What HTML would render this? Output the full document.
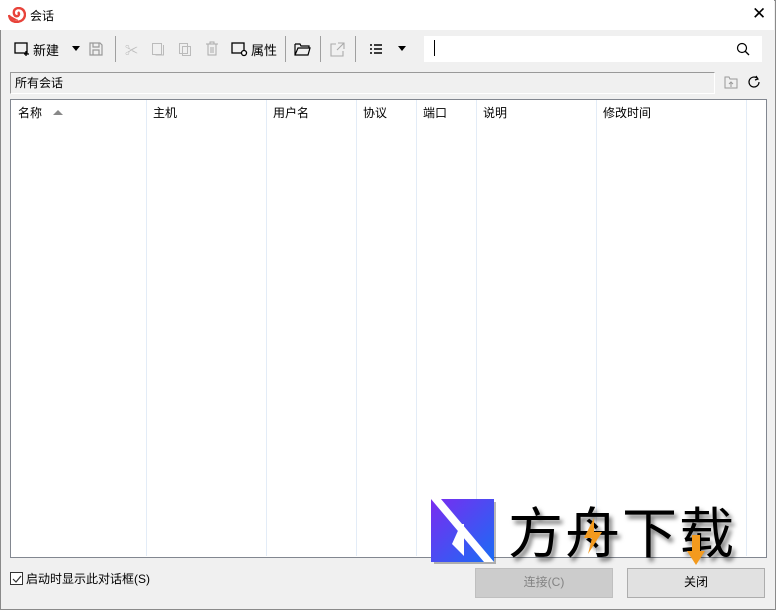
<!DOCTYPE html>
<html><head><meta charset="utf-8"><style>
*{margin:0;padding:0;box-sizing:border-box}
body{width:776px;height:610px;overflow:hidden;background:#f0f0f0;font-family:"Liberation Sans","Noto Sans CJK SC",sans-serif;font-size:12px;color:#000;position:relative}
.win{position:absolute;left:0;top:0;width:776px;height:610px;border:1px solid #8a8a8a}
.title{position:absolute;left:0;top:0;width:774px;height:30px;background:#fff}
.abs{position:absolute}
.sep{position:absolute;top:36px;width:1px;height:26px;background:#a0a0a0}
.col{position:absolute;top:100px;width:1px;height:456px;background:#e3ecf7}
.hd{position:absolute;top:104px;font-size:12px}
</style></head><body>
<div class="win"></div>
<div class="title"></div>
<svg class="abs" style="left:8px;top:7px" width="18" height="16" viewBox="0 0 18 16"><path d="M1 8 Q2 15 9 15 Q17 14 17 7 Q16 1 10 1 Q5 2 6 7 Q7 10 10 9 Q12 7 10 5" fill="none" stroke="#e8433a" stroke-width="2.4"/><path d="M1 8 Q4 14 10 13" fill="#e8433a" stroke="#e8433a"/></svg>
<div class="abs" style="left:30px;top:7px;font-size:12px">会话</div>
<div class="abs" style="left:752px;top:4px;font-size:17px;font-weight:300">✕</div>
<svg class="abs" style="left:14px;top:42px" width="16" height="14"><rect x="1" y="1" width="12" height="10" fill="none" stroke="#000" stroke-width="1.3"/><path d="M12 9v5M10 12h5" stroke="#000" stroke-width="1.3"/></svg>
<div class="abs" style="left:33px;top:40px;font-size:13px">新建</div>
<div class="abs" style="left:72px;top:46px;border:4px solid transparent;border-top:5px solid #000"></div>
<svg class="abs" style="left:89px;top:42px" width="14" height="14"><path d="M1 1h10l2 2v10H1z M4 1v4h6V1 M4 13V8h6v5" fill="none" stroke="#999" stroke-width="1.2"/></svg>
<div class="sep" style="left:115px"></div>
<div class="abs" style="left:125px;top:40px;color:#bbb;font-size:13px">✂</div>
<svg class="abs" style="left:151px;top:42px" width="14" height="14"><rect x="1.5" y="1.5" width="9" height="11" fill="none" stroke="#bbb"/><path d="M12.5 3v10h-8" fill="none" stroke="#bbb"/></svg>
<svg class="abs" style="left:178px;top:42px" width="16" height="16"><rect x="1.5" y="1.5" width="8" height="10" fill="none" stroke="#bbb"/><rect x="4.5" y="4.5" width="8" height="9" fill="none" stroke="#bbb"/></svg>
<svg class="abs" style="left:205px;top:41px" width="14" height="15"><path d="M1 3h12M5 3V1h4v2M3 3v11h8V3M6 6v6M8 6v6" fill="none" stroke="#aaa"/></svg>
<svg class="abs" style="left:231px;top:42px" width="17" height="15"><rect x="1" y="1" width="12" height="10" fill="none" stroke="#000" stroke-width="1.3"/><circle cx="13" cy="11" r="2.5" fill="#fff" stroke="#000" stroke-width="1.3"/></svg>
<div class="abs" style="left:251px;top:40px;font-size:13px">属性</div>
<div class="sep" style="left:285px"></div>
<svg class="abs" style="left:294px;top:43px" width="18" height="13"><path d="M1 1h5l1 2h8v2 M1 1v11h13l2-7H4L1 12" fill="none" stroke="#000" stroke-width="1.2"/></svg>
<div class="sep" style="left:320px"></div>
<svg class="abs" style="left:330px;top:42px" width="15" height="15"><path d="M6 2H1v12h12V9M8 1h6v6M14 1L7 8" fill="none" stroke="#aaa" stroke-width="1.1"/></svg>
<div class="sep" style="left:355px"></div>
<svg class="abs" style="left:369px;top:43px" width="14" height="12"><path d="M1 2h2M1 6h2M1 10h2M5 2h8M5 6h8M5 10h8" stroke="#000" stroke-width="1.5"/></svg>
<div class="abs" style="left:398px;top:46px;border:4px solid transparent;border-top:5px solid #000"></div>
<div class="abs" style="left:424px;top:36px;width:338px;height:26px;background:#fff"></div>
<div class="abs" style="left:434px;top:40px;width:1px;height:16px;background:#000"></div>
<svg class="abs" style="left:736px;top:42px" width="14" height="14"><circle cx="6" cy="6" r="4.5" fill="none" stroke="#000" stroke-width="1.2"/><path d="M9 9l4 4" stroke="#000" stroke-width="1.3"/></svg>
<div class="abs" style="left:10px;top:72px;width:705px;height:22px;border:1px solid #999;border-right-color:#fff;border-bottom-color:#fff;background:#f0f0f0"></div>
<div class="abs" style="left:15px;top:74px;font-size:12px">所有会话</div>
<svg class="abs" style="left:724px;top:76px" width="14" height="13"><path d="M1 1h4l1 2h7v9H1z M7 11V6M5 8l2-2 2 2" fill="none" stroke="#999"/></svg>
<svg class="abs" style="left:747px;top:75px" width="14" height="14"><path d="M12 7a5 5 0 1 1-2-4" fill="none" stroke="#000" stroke-width="1.2"/><path d="M9 1l2 3-3 1" fill="none" stroke="#000" stroke-width="1.2"/></svg>
<div class="abs" style="left:10px;top:99px;width:757px;height:459px;border:1px solid #828790;background:#fff"></div>
<div class="col" style="left:146px"></div><div class="col" style="left:266px"></div><div class="col" style="left:356px"></div><div class="col" style="left:416px"></div><div class="col" style="left:476px"></div><div class="col" style="left:596px"></div><div class="col" style="left:746px"></div>
<div class="hd" style="left:18px">名称</div>
<div class="abs" style="left:53px;top:110px;border:5px solid transparent;border-bottom:5px solid #888;border-top:0"></div>
<div class="hd" style="left:153px">主机</div><div class="hd" style="left:273px">用户名</div><div class="hd" style="left:363px">协议</div><div class="hd" style="left:423px">端口</div><div class="hd" style="left:483px">说明</div><div class="hd" style="left:603px">修改时间</div>
<div class="abs" style="left:10px;top:572px;width:13px;height:13px;border:1px solid #333;background:#fff"></div>
<svg class="abs" style="left:11px;top:573px" width="12" height="12"><path d="M2 6l3 3 5-6" fill="none" stroke="#333" stroke-width="1.2"/></svg>
<div class="abs" style="left:26px;top:570px;font-size:12px">启动时显示此对话框(S)</div>
<div class="abs" style="left:475px;top:568px;width:138px;height:30px;background:#cccccc;border:1px solid #bfbfbf;color:#838383;text-align:center;line-height:27px">连接(C)</div>
<div class="abs" style="left:627px;top:568px;width:138px;height:30px;background:#e1e1e1;border:1px solid #adadad;text-align:center;line-height:27px">关闭</div>
<svg class="abs" style="left:431px;top:499px" width="66" height="66"><defs><linearGradient id="g" x1="0" y1="0" x2="1" y2="1"><stop offset="0" stop-color="#7a2cf0"/><stop offset="1" stop-color="#1a6cf5"/></linearGradient></defs><rect x="3" y="3" width="62" height="62" fill="#333" opacity=".35"/><rect width="63" height="63" fill="url(#g)"/><path d="M0 0h10l53 63H53z" fill="#fff"/><path d="M30 25l3 0 0 32-12-12z" fill="#fff"/></svg>
<div class="abs" style="left:508px;top:496px;font-size:55px;font-family:'Noto Sans CJK SC',sans-serif;letter-spacing:2px;text-shadow:3px 4px 4px rgba(0,0,0,.5);line-height:66px">方舟下载</div>
<svg class="abs" style="left:582px;top:518px" width="22" height="36"><path d="M12 0L2 20h8L6 36 20 14h-8z" fill="#f39a1e"/></svg>
<svg class="abs" style="left:686px;top:535px" width="20" height="32"><path d="M6 0h8v16h5L10 30 1 16h5z" fill="#f39a1e"/></svg>
</body></html>
